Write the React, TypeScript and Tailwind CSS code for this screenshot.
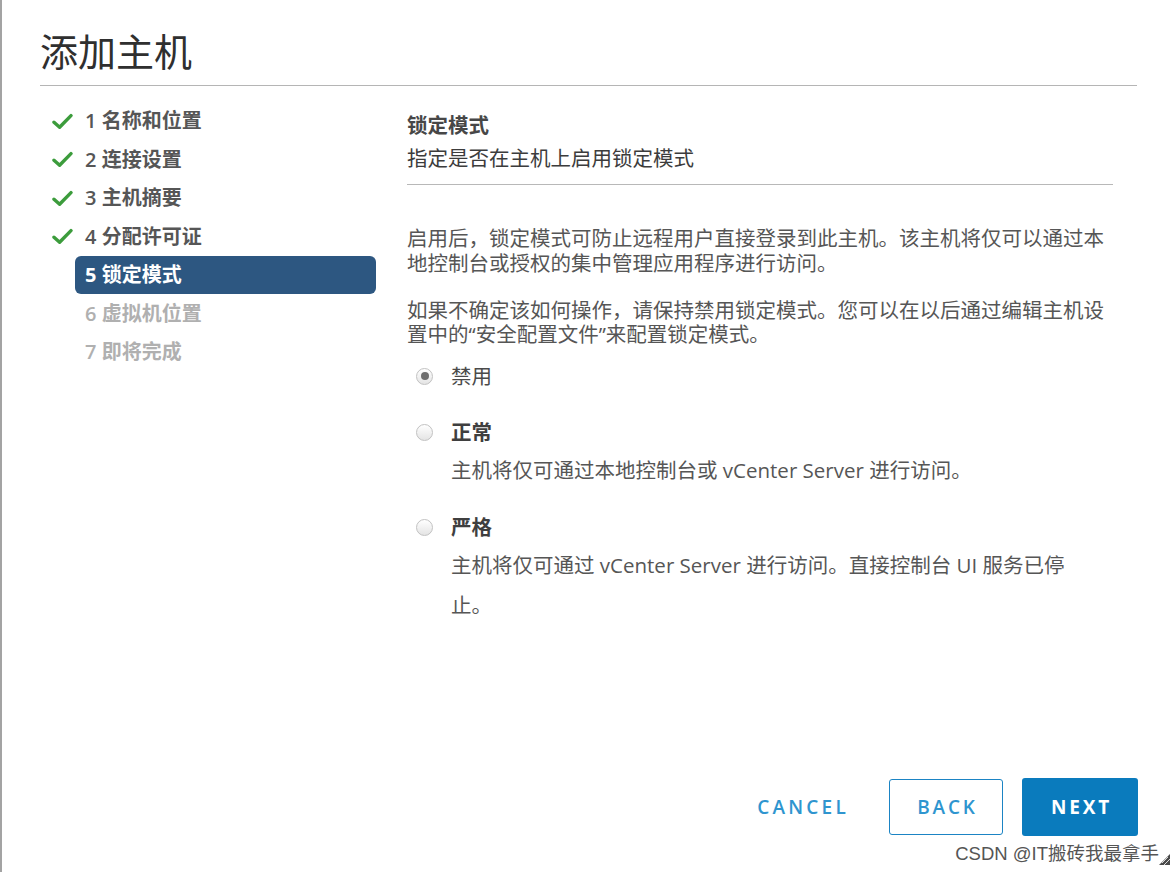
import React from "react";

const FONT = '"Open Sans", "Noto Sans CJK SC", sans-serif';

type Step = { label: string; state: "done" | "active" | "todo" };

const steps: Step[] = [
  { label: "1 名称和位置", state: "done" },
  { label: "2 连接设置", state: "done" },
  { label: "3 主机摘要", state: "done" },
  { label: "4 分配许可证", state: "done" },
  { label: "5 锁定模式", state: "active" },
  { label: "6 虚拟机位置", state: "todo" },
  { label: "7 即将完成", state: "todo" },
];

function Check() {
  return (
    <svg width="21" height="17" viewBox="0 0 21 17" className="shrink-0">
      <path
        d="M2 9.2 L7.6 14.2 L19 2.6"
        fill="none"
        stroke="#3c9c3c"
        strokeWidth="3.4"
        strokeLinecap="round"
        strokeLinejoin="round"
      />
    </svg>
  );
}

function Radio({ checked }: { checked?: boolean }) {
  return (
    <span className="flex h-[17px] w-[17px] shrink-0 items-center justify-center rounded-full border border-[#c2c2c2] bg-gradient-to-b from-[#ffffff] to-[#e4e4e4]">
      {checked && <span className="h-[8px] w-[8px] rounded-full bg-[#6e6e6e]" />}
    </span>
  );
}

function StepNav() {
  return (
    <div className="flex shrink-0 flex-col pl-[50px]">
      {steps.map((s) => (
        <div key={s.label} className="flex h-[38.5px] items-center">
          <div className="flex w-[23px] items-center">{s.state === "done" && <Check />}</div>
          <div
            className={
              s.state === "active"
                ? "flex h-[38px] w-[301px] items-center rounded-[6px] bg-[#2d5781] px-[10px] text-[20px] font-bold text-white"
                : s.state === "done"
                ? "flex h-[38px] w-[301px] items-center px-[10px] text-[20px] font-semibold text-[#565656]"
                : "flex h-[38px] w-[301px] items-center px-[10px] text-[20px] font-semibold text-[#b0b0b0]"
            }
          >
            {s.label}
          </div>
        </div>
      ))}
    </div>
  );
}

function LockdownPanel() {
  return (
    <div className="ml-[31px] flex w-[706px] flex-col text-[20.5px] text-[#565656]">
      <div className="mt-[7px] leading-[33px] font-semibold text-[#474747]">锁定模式</div>
      <div className="leading-[33px] text-[#3c3c3c]">指定是否在主机上启用锁定模式</div>
      <div className="mt-[9px] h-px w-full bg-[#b8b8b8]" />

      <p className="mt-[41px] leading-[25px]">
        启用后，锁定模式可防止远程用户直接登录到此主机。该主机将仅可以通过本地控制台或授权的集中管理应用程序进行访问。
      </p>
      <p className="mt-[22px] leading-[24px]">
        如果不确定该如何操作，请保持禁用锁定模式。您可以在以后通过编辑主机设置中的“安全配置文件”来配置锁定模式。
      </p>

      <div className="mt-[14px] flex items-center pl-[9px] leading-[32px]">
        <Radio checked />
        <span className="ml-[18px] text-[#4a4a4a]">禁用</span>
      </div>

      <div className="mt-[24px] flex items-center pl-[9px] leading-[32px]">
        <Radio />
        <span className="ml-[18px] font-semibold text-[#3f3f3f]">正常</span>
      </div>
      <div className="mt-[2px] pl-[44px] leading-[40px]">
        主机将仅可通过本地控制台或 vCenter Server 进行访问。
      </div>

      <div className="mt-[21px] flex items-center pl-[9px] leading-[32px]">
        <Radio />
        <span className="ml-[18px] font-semibold text-[#3f3f3f]">严格</span>
      </div>
      <div className="mt-[2px] pl-[44px] leading-[40px]">
        主机将仅可通过 vCenter Server 进行访问。直接控制台 UI 服务已停
        <br />
        止。
      </div>
    </div>
  );
}

export default function App() {
  return (
    <div
      className="relative flex h-[872px] w-[1175px] flex-col overflow-hidden border-l-2 border-[#a3a3a3] bg-white"
      style={{ fontFamily: FONT }}
    >
      <h1 className="ml-[38px] pt-[28px] text-[38px] leading-[46px] font-normal text-[#2f2f2f]">添加主机</h1>
      <div className="ml-[38px] mr-[38px] mt-[11px] h-px bg-[#b5b5b5]" />

      <div className="mt-[16px] flex">
        <StepNav />
        <LockdownPanel />
      </div>

      <div className="flex-1" />

      <div className="mb-[36px] flex items-center justify-end gap-[19px] pr-[37px]">
        <button className="mr-[11px] h-[56px] px-[10px] text-[19px] font-semibold tracking-[0.17em] text-[#2f95cf]">
          CANCEL
        </button>
        <button className="h-[56px] w-[114px] rounded-[3px] border border-[#1b84c4] pl-[3px] text-[19px] font-semibold tracking-[0.15em] text-[#2f95cf]">
          BACK
        </button>
        <button className="h-[58px] w-[116px] rounded-[3px] bg-[#0a7bbd] pl-[3px] text-[19px] font-bold tracking-[0.15em] text-white">
          NEXT
        </button>
      </div>

      <div
        className="absolute bottom-[7px] right-[16px] text-[18.5px] leading-[22px] text-[#555555]"
        style={{ fontFamily: '"Liberation Sans", "Noto Sans CJK SC", sans-serif' }}
      >
        CSDN @IT搬砖我最拿手
      </div>
      <svg className="absolute bottom-[7px] right-[5px]" width="11" height="11" viewBox="0 0 11 11">
        <path d="M11 0 L11 11 L0 11 Z" fill="#4a4a4a" />
        <path d="M9 3 L3 9 M11 5 L5 11 M7 1 L1 7" stroke="#ffffff" strokeWidth="0.8" />
      </svg>
    </div>
  );
}
